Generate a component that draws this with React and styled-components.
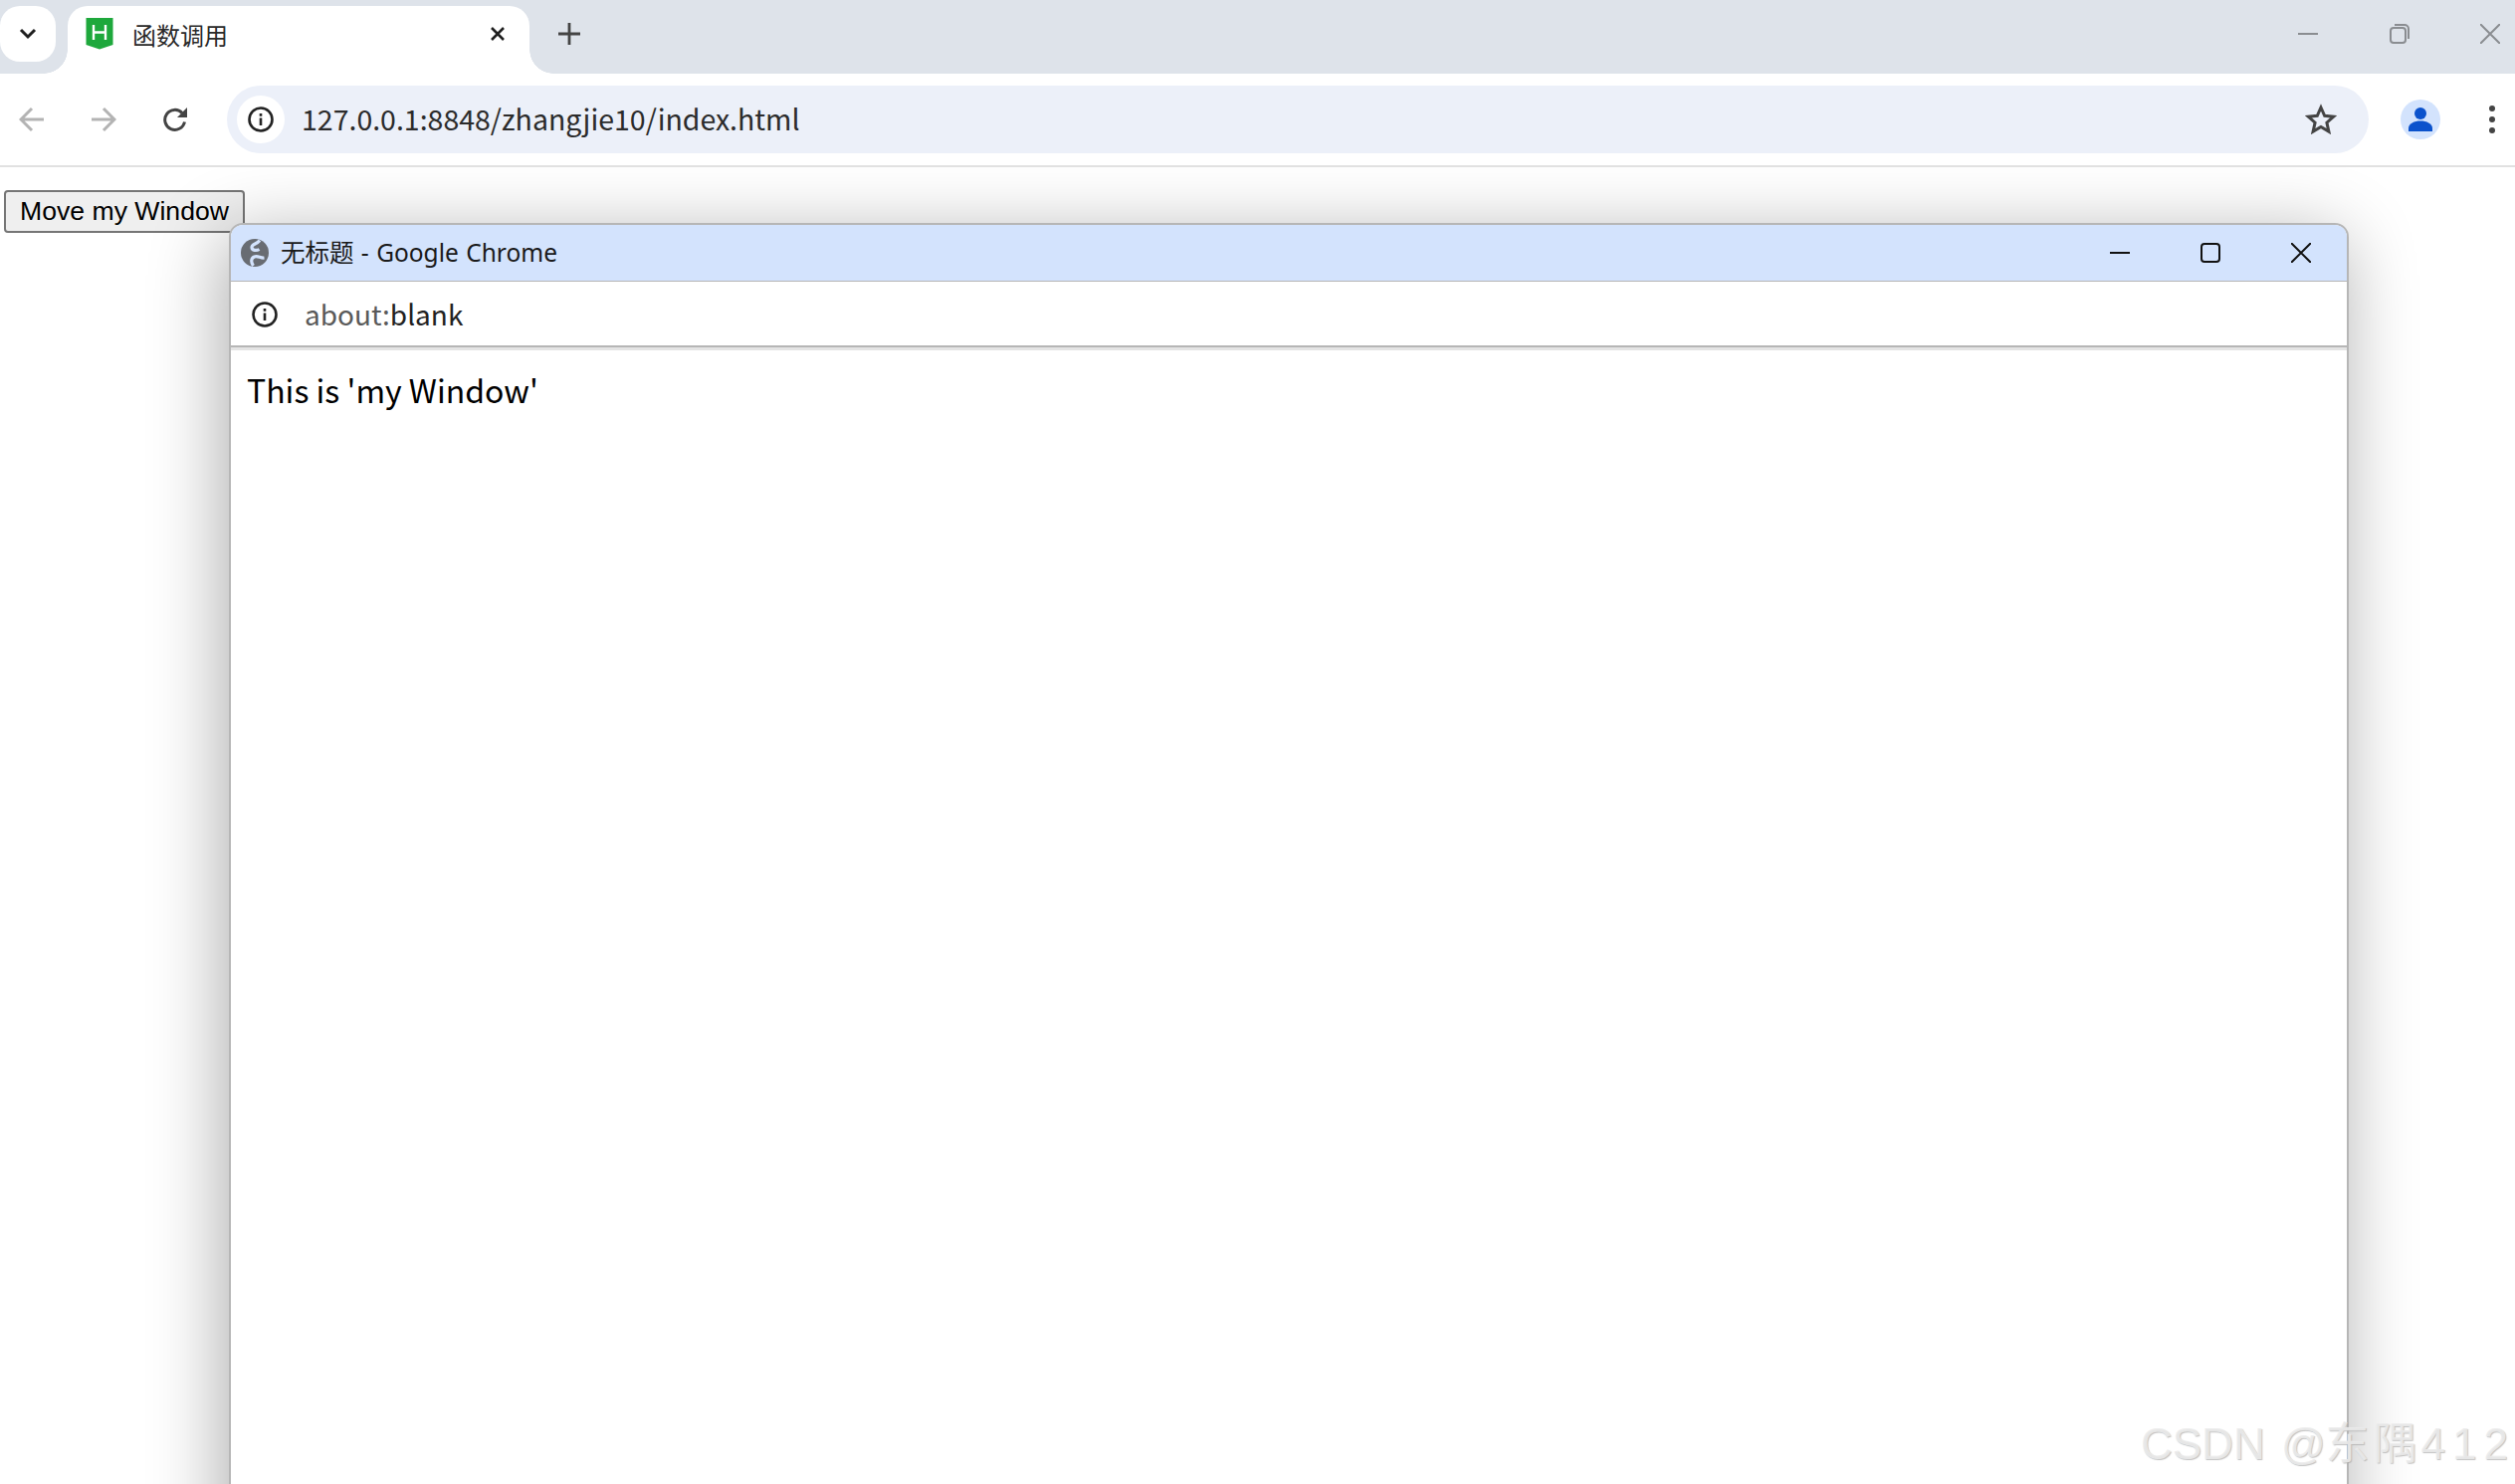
import React from "react";
import styled, { createGlobalStyle } from "styled-components";

const GlobalStyle = createGlobalStyle`
    html, body {
        margin: 0;
        padding: 0;
        background: #fff;
    }
`;

const UI_FONT = `"Noto Sans CJK SC", "Noto Sans", sans-serif`;

function InfoIcon({ size = 26 }) {
    return (
        <svg width={size} height={size} viewBox="0 0 26 26" fill="none">
            <circle cx="13" cy="13" r="11.5" stroke="#222" strokeWidth="2.6" />
            <rect x="11.7" y="11.5" width="2.6" height="7.5" fill="#222" />
            <rect x="11.7" y="7" width="2.6" height="2.8" fill="#222" />
        </svg>
    );
}

function App() {
    return (
        <Page>
            <GlobalStyle />
            <TabStrip>
                <TabSearch>
                    <svg width="18" height="12" viewBox="0 0 18 12" fill="none">
                        <path d="M2 2l7 7 7-7" stroke="#1f1f1f" strokeWidth="3" />
                    </svg>
                </TabSearch>
                <Tab>
                    <svg width="28" height="32" viewBox="0 0 28 32">
                        <path d="M0.5 0h27v27l-13.500 4.500L0.500 27z" fill="#1ea83c" />
                        <path d="M8 7v15M20 7v15M8 14.500h12" stroke="#fff" strokeWidth="2.400" fill="none" />
                    </svg>
                    <TabTitle>函数调用</TabTitle>
                    <TabClose>
                        <svg width="16" height="16" viewBox="0 0 16 16" fill="none">
                            <path d="M2 2l12 12M14 2L2 14" stroke="#1f1f1f" strokeWidth="2.600" />
                        </svg>
                    </TabClose>
                </Tab>
                <NewTab>
                    <svg width="22" height="22" viewBox="0 0 22 22" fill="none">
                        <path d="M11 0v22M0 11h22" stroke="#444" strokeWidth="2.800" />
                    </svg>
                </NewTab>
                <WindowControls>
                    <svg width="20" height="20" viewBox="0 0 20 20" fill="none">
                        <path d="M0 10h20" stroke="#8a8d91" strokeWidth="2" />
                    </svg>
                    <svg width="20" height="20" viewBox="0 0 20 20" fill="none">
                        <rect x="1" y="4" width="15" height="15" rx="3" stroke="#8a8d91" strokeWidth="2" />
                        <path d="M5 1h10a4 4 0 0 1 4 4v10" stroke="#8a8d91" strokeWidth="2" />
                    </svg>
                    <svg width="20" height="20" viewBox="0 0 20 20" fill="none">
                        <path d="M0 0l20 20M20 0L0 20" stroke="#8a8d91" strokeWidth="2" />
                    </svg>
                </WindowControls>
            </TabStrip>

            <Toolbar>
                <NavButton>
                    <svg width="26" height="26" viewBox="0 0 26 26" fill="none">
                        <path d="M25 13H3M13 2L2 13l11 11" stroke="#b3b3b3" strokeWidth="3" />
                    </svg>
                </NavButton>
                <NavButton>
                    <svg width="26" height="26" viewBox="0 0 26 26" fill="none">
                        <path d="M1 13h22M13 2l11 11-11 11" stroke="#b3b3b3" strokeWidth="3" />
                    </svg>
                </NavButton>
                <NavButton>
                    <svg width="26" height="26" viewBox="0 0 26 26" fill="none">
                        <path d="M22.500 15.500A10 10 0 1 1 20 6.500" stroke="#444" strokeWidth="3" />
                        <path d="M25 1v10H15z" fill="#444" />
                    </svg>
                </NavButton>
                <Omnibox>
                    <SiteInfo>
                        <InfoIcon />
                    </SiteInfo>
                    <Url>127.0.0.1:8848/zhangjie10/index.html</Url>
                    <svg width="32" height="32" viewBox="0 0 32 32" fill="none">
                        <path d="M16 4l3.700 8.300 9 .9-6.800 6 2 8.900L16 23.500l-7.900 4.600 2-8.900-6.800-6 9-.9z" stroke="#444" strokeWidth="3" strokeLinejoin="miter" />
                    </svg>
                </Omnibox>
                <Avatar>
                    <svg width="26" height="26" viewBox="0 0 26 26" fill="#0b52cc">
                        <circle cx="13" cy="7" r="6" />
                        <path d="M1 25v-3c0-5 6-7.500 12-7.500S25 17 25 22v3z" />
                    </svg>
                </Avatar>
                <MenuDots>
                    <i />
                    <i />
                    <i />
                </MenuDots>
            </Toolbar>

            <Content>
                <MoveButton>Move my Window</MoveButton>
                <Popup>
                    <PopupTitleBar>
                        <svg width="28" height="28" viewBox="0 0 28 28" fill="none">
                            <circle cx="14" cy="14" r="14" fill="#686c72" />
                            <path d="M19 1.500c-3 4-8 3.500-8 7s5 3.500 7.500 2" stroke="#d3e3fd" strokeWidth="3.200" />
                            <path d="M12.500 27c-2.500-3.500-2.500-7.500 1-9s6 1.500 10 1" stroke="#d3e3fd" strokeWidth="3.200" />
                        </svg>
                        <PopupTitle>无标题 - Google Chrome</PopupTitle>
                        <PopupControls>
                            <svg width="20" height="20" viewBox="0 0 20 20" fill="none">
                                <path d="M0 10h20" stroke="#111" strokeWidth="2" />
                            </svg>
                            <svg width="20" height="20" viewBox="0 0 20 20" fill="none">
                                <rect x="1" y="1" width="18" height="18" rx="3" stroke="#111" strokeWidth="2" />
                            </svg>
                            <svg width="20" height="20" viewBox="0 0 20 20" fill="none">
                                <path d="M0 0l20 20M20 0L0 20" stroke="#111" strokeWidth="2" />
                            </svg>
                        </PopupControls>
                    </PopupTitleBar>
                    <PopupAddress>
                        <InfoIcon />
                        <PopupUrl>
                            <span>about:</span>blank
                        </PopupUrl>
                    </PopupAddress>
                    <PopupBody>This is 'my Window'</PopupBody>
                </Popup>
            </Content>

            <Watermark>
                CSDN @<b>东隅</b>
                <em>412</em>
            </Watermark>
        </Page>
    );
}

export default App;

const Page = styled.div`
    position: relative;
    width: 2527px;
    height: 1491px;
    display: flex;
    flex-direction: column;
    overflow: hidden;
    background: #fff;
    font-family: ${UI_FONT};
`;

const TabStrip = styled.div`
    height: 74px;
    flex: none;
    display: flex;
    align-items: flex-end;
    background: #dee3ea;
`;

const TabSearch = styled.div`
    width: 56px;
    height: 56px;
    margin-bottom: 12px;
    margin-right: 12px;
    border-radius: 20px;
    background: #fff;
    display: flex;
    align-items: center;
    justify-content: center;
`;

const Tab = styled.div`
    position: relative;
    width: 464px;
    height: 68px;
    box-sizing: border-box;
    padding: 0 22px 12px 18px;
    display: flex;
    align-items: center;
    background: #fff;
    border-radius: 20px 20px 0 0;

    &::before,
    &::after {
        content: "";
        position: absolute;
        bottom: 0;
        width: 24px;
        height: 24px;
    }

    &::before {
        left: -24px;
        background: radial-gradient(circle at 0 0, transparent 23.5px, #fff 24px);
    }

    &::after {
        right: -24px;
        background: radial-gradient(circle at 100% 0, transparent 23.5px, #fff 24px);
    }
`;

const TabTitle = styled.span`
    margin-left: 19px;
    margin-top: 2px;
    font-size: 24px;
    line-height: 32px;
    color: #2a2a2a;
    flex: 1;
`;

const TabClose = styled.div`
    display: flex;
    margin-right: 2px;
`;

const NewTab = styled.div`
    margin-left: 29px;
    margin-bottom: 29px;
    display: flex;
`;

const WindowControls = styled.div`
    margin-left: auto;
    margin-right: 15px;
    margin-bottom: 30px;
    display: flex;
    gap: 71.500px;
`;

const Toolbar = styled.div`
    height: 94px;
    flex: none;
    box-sizing: border-box;
    border-bottom: 2px solid #e1e1e1;
    padding-left: 19px;
    display: flex;
    align-items: center;
    background: #fff;
`;

const NavButton = styled.div`
    width: 26px;
    height: 26px;
    margin-right: 46px;
    display: flex;
`;

const Omnibox = styled.div`
    width: 2152px;
    height: 68px;
    margin-left: -7px;
    box-sizing: border-box;
    padding: 0 32px 0 10px;
    border-radius: 34px;
    background: #ecf0f9;
    display: flex;
    align-items: center;
`;

const SiteInfo = styled.div`
    width: 48px;
    height: 48px;
    flex: none;
    border-radius: 50%;
    background: #fff;
    display: flex;
    align-items: center;
    justify-content: center;
`;

const Url = styled.span`
    flex: 1;
    margin-left: 17px;
    margin-bottom: 3px;
    font-size: 28.500px;
    line-height: 40px;
    color: #2b2b2b;
`;

const Avatar = styled.div`
    width: 40px;
    height: 40px;
    margin-left: 32px;
    flex: none;
    border-radius: 50%;
    background: #d3e3fd;
    display: flex;
    align-items: center;
    justify-content: center;
`;

const MenuDots = styled.div`
    margin-left: 49px;
    display: flex;
    flex-direction: column;
    gap: 5px;

    i {
        display: block;
        width: 6px;
        height: 6px;
        border-radius: 50%;
        background: #444;
    }
`;

const Content = styled.div`
    position: relative;
    flex: 1;
    overflow: hidden;
    padding: 23px 0 0 4px;
    background: #fff;
`;

const MoveButton = styled.button`
    display: block;
    width: 242px;
    height: 43px;
    box-sizing: border-box;
    padding: 0;
    border: 2px solid #767676;
    border-radius: 4px;
    background: #efefef;
    font-family: "Liberation Sans", Arial, sans-serif;
    font-size: 26.600px;
    color: #000;
    white-space: nowrap;
`;

const Popup = styled.div`
    position: absolute;
    left: 230px;
    top: 56px;
    width: 2130px;
    height: 1400px;
    box-sizing: border-box;
    border: 2px solid #b6b6b6;
    border-radius: 14px 14px 0 0;
    background: #fff;
    box-shadow: -6px 14px 75px rgba(0, 0, 0, 0.33);
    display: flex;
    flex-direction: column;
`;

const PopupTitleBar = styled.div`
    height: 57px;
    flex: none;
    box-sizing: border-box;
    padding: 0 36px 0 10px;
    border-bottom: 1px solid #b6b6b6;
    border-radius: 12px 12px 0 0;
    background: #d3e3fd;
    display: flex;
    align-items: center;
`;

const PopupTitle = styled.span`
    flex: 1;
    margin-left: 12px;
    margin-bottom: 1px;
    font-family: "Noto Sans", "Noto Sans CJK SC", sans-serif;
    font-size: 24.500px;
    line-height: 32px;
    word-spacing: 1px;
    color: #1a1a1a;
`;

const PopupControls = styled.div`
    display: flex;
    gap: 71px;
`;

const PopupAddress = styled.div`
    height: 66px;
    flex: none;
    box-sizing: border-box;
    padding: 2px 0 0 21px;
    border-bottom: 2px solid #b6b6b6;
    display: flex;
    align-items: center;
    background: #fff;
`;

const PopupUrl = styled.span`
    margin-left: 27px;
    margin-bottom: 3px;
    font-size: 28px;
    line-height: 40px;
    color: #222;

    span {
        color: #5a5a5a;
    }
`;

const PopupBody = styled.div`
    flex: 1;
    border-top: 3px solid #e4e4e4;
    padding: 16px 16px;
    font-size: 32px;
    line-height: 46px;
    color: #000;
`;

const Watermark = styled.div`
    position: absolute;
    left: 2151px;
    top: 1421px;
    font-family: "Liberation Sans", "Noto Sans CJK SC", sans-serif;
    font-size: 44px;
    line-height: 60px;
    word-spacing: 4px;
    white-space: nowrap;
    color: rgba(236, 236, 236, 0.9);
    text-shadow: 1px 1px 1px rgba(170, 170, 170, 0.7);

    b {
        font-weight: 400;
        letter-spacing: 4px;
    }

    em {
        font-style: normal;
        letter-spacing: 7px;
    }
`;
